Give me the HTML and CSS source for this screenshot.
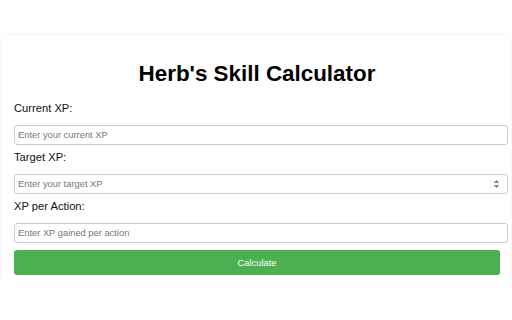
FILE: index.html
```html
<!DOCTYPE html>
<html lang="en">
<head>
  <meta charset="UTF-8" />
  <title>Herb's Skill Calculator</title>
  <link rel="stylesheet" href="styles.css">
</head>
<body>
  <div class="container">
    <h1>Herb's Skill Calculator</h1>

    <label for="currentXP">Current XP:</label>
    <input type="number" id="currentXP" placeholder="Enter your current XP" />

    <label for="targetXP">Target XP:</label>
    <input type="number" id="targetXP" class="hovered" placeholder="Enter your target XP" />

    <label for="xpPerAction">XP per Action:</label>
    <input type="number" id="xpPerAction" placeholder="Enter XP gained per action" />

    <button type="button" id="calculate">Calculate</button>
  </div>
</body>
</html>
```

FILE: styles.css
```css
body {
  font-family: "Liberation Sans", Arial, sans-serif;
  margin: 0;
  padding: 0;
  background: #fff;
}

.container {
  margin: 35px 1px 0 1px;
  padding: 11px 11px 11px 13px;
  background: #fff;
  box-shadow: 0 0 3px rgba(0, 0, 0, 0.08);
}

h1 {
  font-size: 22.4px;
  text-align: center;
  margin: 15px 0;
  color: #000;
}

label {
  display: block;
  font-size: 11.2px;
  margin: 6px 0 11px;
  color: #111;
}

input {
  display: block;
  box-sizing: content-box;
  width: 100%;
  height: 12px;
  padding: 3px 3px;
  border: 1px solid #ccc;
  border-radius: 3px;
  font-family: "Liberation Sans", Arial, sans-serif;
  font-size: 9.33px;
  margin: 0;
}

input::placeholder {
  color: #777;
}

input::-webkit-inner-spin-button {
  opacity: 0;
}

input.hovered::-webkit-inner-spin-button {
  opacity: 1;
}

button {
  display: block;
  width: 100%;
  height: 25px;
  margin-top: 7px;
  background: #4caf50;
  color: #fff;
  border: none;
  border-radius: 3px;
  font-family: "Liberation Sans", Arial, sans-serif;
  font-size: 9.33px;
  cursor: pointer;
}
```
